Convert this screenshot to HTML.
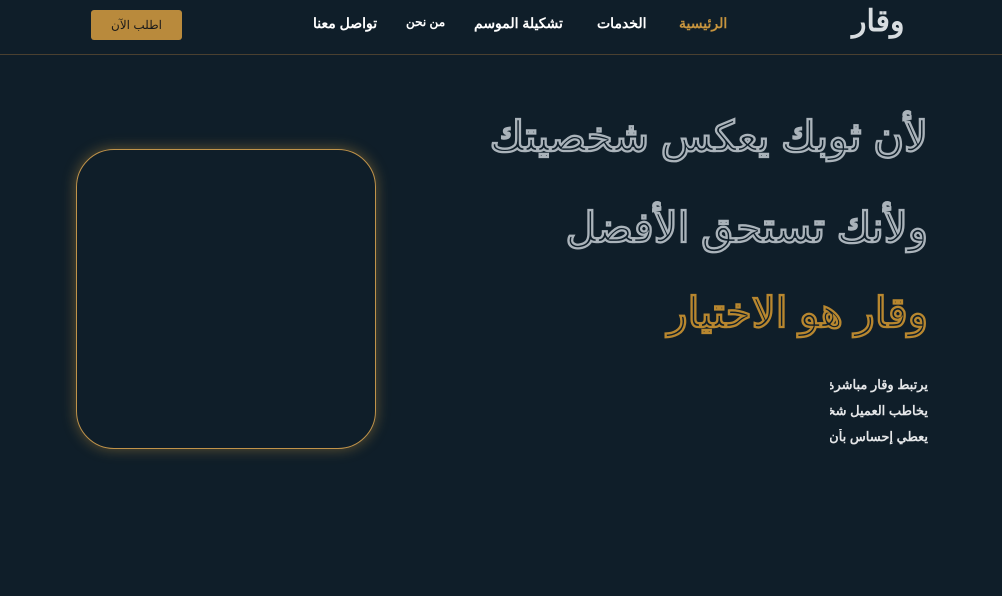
<!DOCTYPE html>
<html dir="rtl"><head><meta charset="utf-8"><style>
body{margin:0;width:1002px;height:596px;background:#0f1e29;overflow:hidden;font-family:"Liberation Sans","Noto Sans CJK SC",sans-serif;position:relative}
.hdr{position:absolute;left:0;top:0;width:1002px;height:54px;border-bottom:1px solid #4a4030}
.logo{position:absolute;left:852px;top:4px;font-size:30px;font-weight:bold;color:#d8dde0;letter-spacing:-1px}
.nav a{position:absolute;top:15px;font-size:14px;font-weight:bold;color:#fff;text-decoration:none;white-space:nowrap}
.btn{position:absolute;left:91px;top:10px;width:91px;height:30px;background:#b98a3c;border-radius:3px;color:#1a1a1a;font-size:12px;text-align:center;line-height:30px}
.h{position:absolute;right:74px;font-size:42px;font-weight:bold;white-space:nowrap;color:transparent;-webkit-text-stroke:1px #aab3ba}
.p{position:absolute;left:830px;width:98px;overflow:hidden;font-size:13px;font-weight:bold;color:#e4e6e8;white-space:nowrap;text-align:right}
.box{position:absolute;left:76px;top:149px;width:298px;height:298px;border:1px solid #c0934a;border-radius:38px;box-shadow:0 0 14px rgba(200,150,60,.45)}
</style></head><body>
<div class="hdr"></div>
<div class="logo">وقار</div>
<div class="nav">
<a style="left:679px;color:#c6943e">الرئيسية</a>
<a style="left:597px">الخدمات</a>
<a style="left:474px">تشكيلة الموسم</a>
<a style="left:406px;font-size:12px">من نحن</a>
<a style="left:313px">تواصل معنا</a>
</div>
<div class="btn">اطلب الآن</div>
<div class="h" style="top:112px">لأن ثوبك يعكس شخصيتك</div>
<div class="h" style="top:203px">ولأنك تستحق الأفضل</div>
<div class="h" style="top:288px;-webkit-text-stroke:1px #b8872f">وقار هو الاختيار</div>
<div class="p" style="top:377px">يرتبط وقار مباشرة بـ</div>
<div class="p" style="top:403px">يخاطب العميل شخصيًا</div>
<div class="p" style="top:429px">يعطي إحساس بأن العميل</div>
<div class="box"></div>
</body></html>
